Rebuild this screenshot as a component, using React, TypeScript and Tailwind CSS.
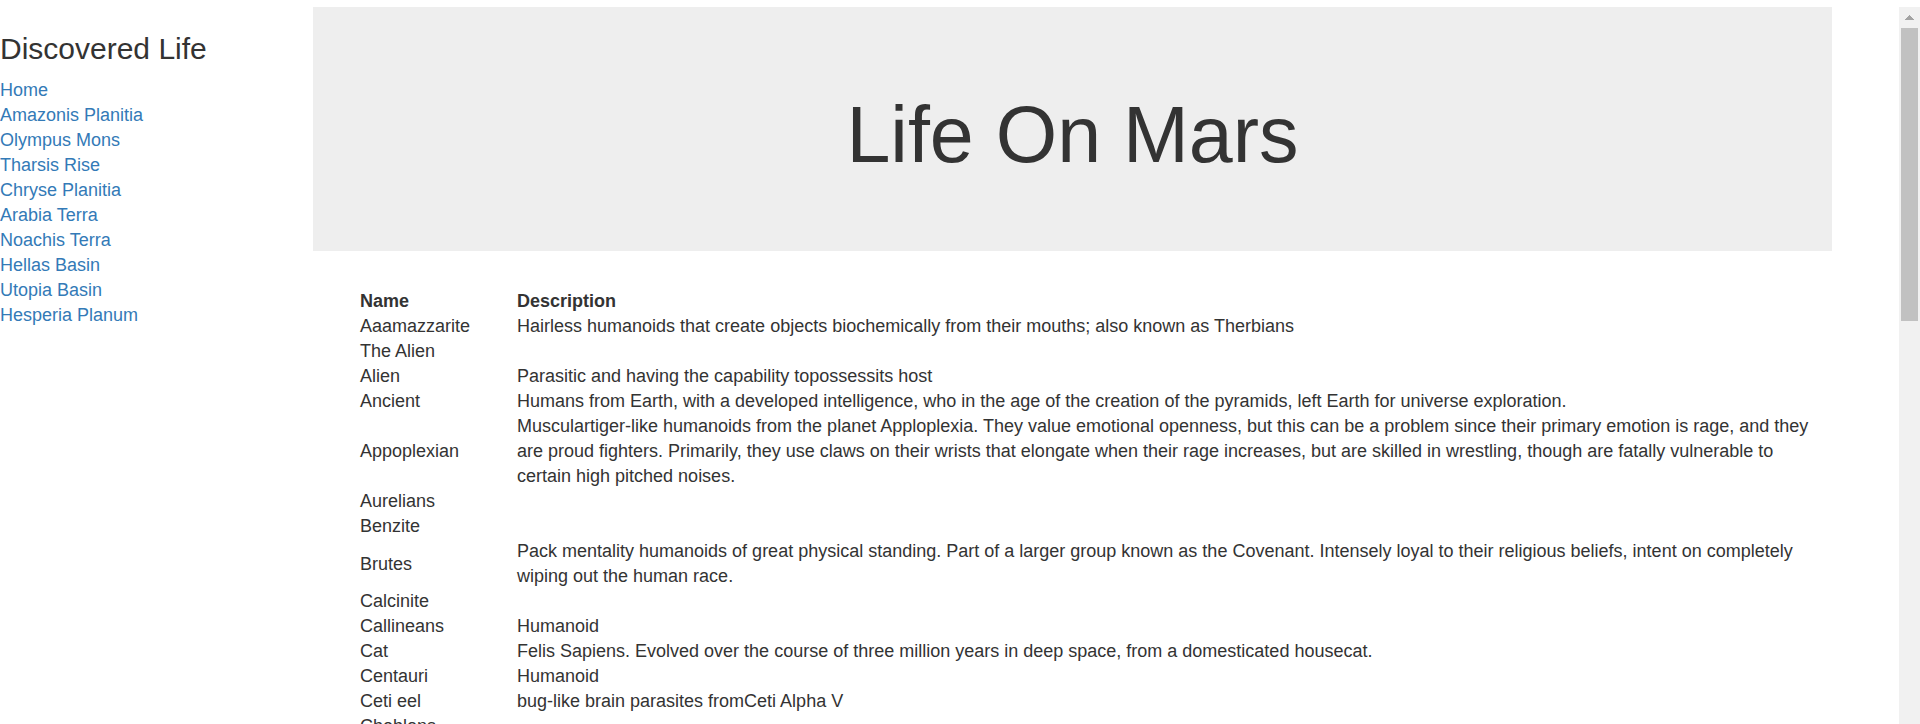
const places = [
  'Home',
  'Amazonis Planitia',
  'Olympus Mons',
  'Tharsis Rise',
  'Chryse Planitia',
  'Arabia Terra',
  'Noachis Terra',
  'Hellas Basin',
  'Utopia Basin',
  'Hesperia Planum',
];

const species: { name: string; description?: string }[] = [
  {
    name: 'Aaamazzarite',
    description:
      'Hairless humanoids that create objects biochemically from their mouths; also known as Therbians',
  },
  { name: 'The Alien' },
  { name: 'Alien', description: 'Parasitic and having the capability topossessits host' },
  {
    name: 'Ancient',
    description:
      'Humans from Earth, with a developed intelligence, who in the age of the creation of the pyramids, left Earth for universe exploration.',
  },
  {
    name: 'Appoplexian',
    description:
      'Musculartiger-like humanoids from the planet Apploplexia. They value emotional openness, but this can be a problem since their primary emotion is rage, and they are proud fighters. Primarily, they use claws on their wrists that elongate when their rage increases, but are skilled in wrestling, though are fatally vulnerable to certain high pitched noises.',
  },
  { name: 'Aurelians' },
  { name: 'Benzite' },
  {
    name: 'Brutes',
    description:
      'Pack mentality humanoids of great physical standing. Part of a larger group known as the Covenant. Intensely loyal to their religious beliefs, intent on completely wiping out the human race.',
  },
  { name: 'Calcinite' },
  { name: 'Callineans', description: 'Humanoid' },
  {
    name: 'Cat',
    description:
      'Felis Sapiens. Evolved over the course of three million years in deep space, from a domesticated housecat.',
  },
  { name: 'Centauri', description: 'Humanoid' },
  { name: 'Ceti eel', description: 'bug-like brain parasites fromCeti Alpha V' },
  { name: 'Cheblons' },
];

function Sidebar() {
  return (
    <nav className="w-[313px] shrink-0 pt-[25px]">
      <h2 className="mb-3 text-[30px] leading-[34px]">Discovered Life</h2>
      <ul>
        {places.map((place) => (
          <li key={place}>
            <a href="#" className="text-[#337ab7] hover:underline">
              {place}
            </a>
          </li>
        ))}
      </ul>
    </nav>
  );
}

function SpeciesTable() {
  return (
    <table className="w-full">
      <thead>
        <tr className="text-left">
          <th className="w-[157px] font-bold">Name</th>
          <th className="font-bold">Description</th>
        </tr>
      </thead>
      <tbody>
        {species.map(({ name, description }) => (
          <tr key={name}>
            <td>{name}</td>
            <td>{description}</td>
          </tr>
        ))}
      </tbody>
    </table>
  );
}

function ScrollTrack() {
  return (
    <div aria-hidden="true" className="flex w-[21px] shrink-0 flex-col items-center bg-[#f1f1f1]">
      <div className="flex h-[21px] items-center justify-center">
        <svg width="9" height="5" viewBox="0 0 9 5" fill="#a3a3a3" shapeRendering="crispEdges">
          <path d="M4 0h1v1h1v1h1v1h1v1h1v1H0V4h1V3h1V2h1V1h1z" />
        </svg>
      </div>
      <div className="h-[293px] w-[17px] bg-[#c1c1c1]" />
    </div>
  );
}

export default function App() {
  return (
    <div className="flex h-screen overflow-hidden bg-white pt-[7px] font-['Liberation_Sans',Arial,sans-serif] text-[18px] leading-[25px] text-[#333]">
      <Sidebar />
      <main className="min-w-0 flex-1 overflow-y-auto pr-[67px] [scrollbar-width:none]">
        <header className="bg-[#eee] pt-[84px] pb-[73px] text-center">
          <h1 className="text-[79px] leading-[87px]">Life On Mars</h1>
        </header>
        <div className="py-[38px] pr-3 pl-[47px]">
          <SpeciesTable />
        </div>
      </main>
      <ScrollTrack />
    </div>
  );
}
